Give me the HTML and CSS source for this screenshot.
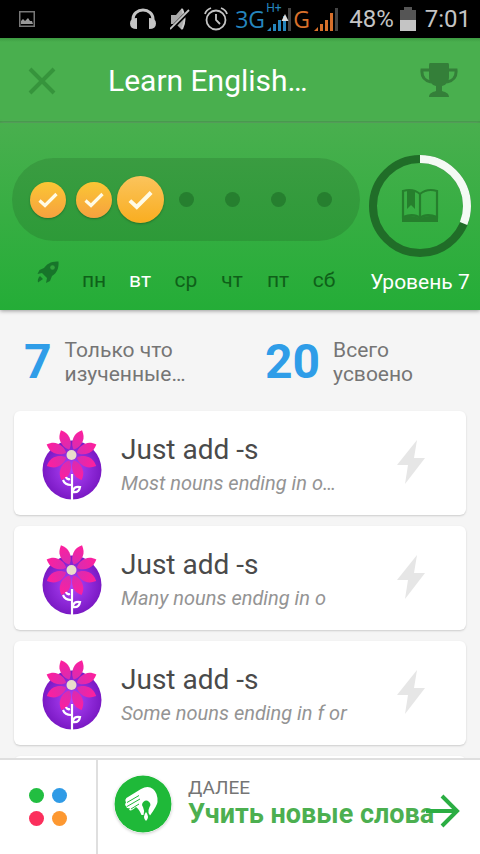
FILE: index.html
```html
<!DOCTYPE html>
<html lang="ru">
<head>
<meta charset="utf-8">
<meta name="viewport" content="width=device-width, initial-scale=1">
<title>Learn English</title>
<link rel="stylesheet" href="styles.css">
</head>
<body>
<svg class="defs" width="0" height="0" aria-hidden="true">
  <defs>
    <radialGradient id="orb"><stop offset="0" stop-color="#b044fa"/><stop offset="1" stop-color="#7a19c4"/></radialGradient>
    <linearGradient id="petal-fill" x1="0" y1="0" x2="0" y2="1"><stop offset="0" stop-color="#ff1f9c"/><stop offset="1" stop-color="#d82cb2"/></linearGradient>
    <path id="petal" d="M0-6C-3-8-5-12-5-17C-5-21-3-24 0-27C3-24 5-21 5-17C5-12 3-8 0-6Z" fill="url(#petal-fill)"/>
  </defs>
  <symbol id="flower" viewBox="0 0 60 72">
    <circle cx="30" cy="41" r="29.5" fill="url(#orb)"/>
    <g transform="translate(29.5 26)">
      <use href="#petal" transform="rotate(23)"/>
      <use href="#petal" transform="rotate(67)"/>
      <use href="#petal" transform="rotate(114)"/>
      <use href="#petal" transform="rotate(158)"/>
      <use href="#petal" transform="rotate(202)"/>
      <use href="#petal" transform="rotate(246)"/>
      <use href="#petal" transform="rotate(293)"/>
      <use href="#petal" transform="rotate(337)"/>
    </g>
    <circle cx="29.500" cy="26" r="5" fill="#eaddcb"/>
    <path d="M30 45V71M29 56Q23 56 21 51M28 50Q25 51 24 48M31 63Q31 57 38 58Q37 64 31 63" fill="none" stroke="#fff" stroke-width="2.2"/>
  </symbol>
  <symbol id="bolt" viewBox="0 0 28 46"><path d="M20 0L0 25H11L8 44L28 18H17Z" fill="#e6e6e6"/></symbol>
  <symbol id="check" viewBox="0 0 20 16"><path d="M1.500 8.500L7 13.500L18.500 2" fill="none" stroke="#fffbe6" stroke-width="3.200"/></symbol>
</svg>

<div class="status">
  <svg class="status-photo" width="16" height="16" viewBox="0 0 16 16"><path d="M.75.75h14.500v14.500H.75z" fill="none" stroke="#777" stroke-width="1.500"/><path d="M2 13V10l2-2 2 2 3-3 2 3h2l1 3z" fill="#999"/></svg>
  <svg width="26" height="22" viewBox="0 0 26 22"><path d="M3 13V11A10 9 0 0 1 23 11V13" fill="none" stroke="#c4c4c4" stroke-width="3"/><path d="M7 10v11Q0 21 0 15.500T7 10zM19 10v11q7 0 7-5.500T19 10z" fill="#c4c4c4"/></svg>
  <svg class="status-mute" width="20" height="24" viewBox="0 0 20 24"><path d="M1 8h5l6-7q4 10 0 22l-6-6H1z" fill="#aaa"/><path d="M12 2q5 10 0 20" fill="none" stroke="#ccc" stroke-width="2"/><path d="M1 22L20 3" stroke="#000" stroke-width="4"/><path d="M0 22L19 3" stroke="#c4c4c4" stroke-width="1.800"/></svg>
  <svg class="status-alarm" width="24" height="24" viewBox="0 0 24 24" fill="none" stroke="#c4c4c4" stroke-width="1.800"><circle cx="12" cy="13" r="9.500"/><path d="M12 7v6l4 4M1 7Q2 3 7 1M17 1q5 2 6 6"/></svg>
  <span class="net net-blue">3G</span>
  <span class="signal">
    <span class="hspa">H+</span>
    <svg width="24" height="24" viewBox="0 0 24 24"><path d="M0 24l4-4v4zM6 17h3v7H6zM11 13h3v11h-3zM16 9h3v15h-3z" fill="#2585bd"/><path d="M21 1h3v23h-3z" fill="#444"/><path d="M18 7l3.500 7h-7z" fill="#ddd"/></svg>
  </span>
  <span class="net net-orange">G</span>
  <svg class="bars-orange" width="24" height="24" viewBox="0 0 24 24"><path d="M0 24l4-4v4zM6 17h3v7H6zM11 13h3v11h-3zM16 6h3v18h-3z" fill="#d8702b"/><path d="M21 1h3v23h-3z" fill="#444"/></svg>
  <span class="battery-level">48%</span>
  <svg class="battery" width="16" height="24" viewBox="0 0 16 24"><path d="M4 0h8v3h4v10H0V3h4z" fill="#555"/><path d="M0 13h16v11H0z" fill="#c4c4c4"/></svg>
  <time>7:01</time>
</div>

<header class="appbar">
  <button class="icon-button" aria-label="Закрыть"><svg width="28" height="28" viewBox="0 0 28 28"><path d="M2 2L26 26M26 2L2 26" stroke="#36943c" stroke-width="4"/></svg></button>
  <h1>Learn English…</h1>
  <button class="icon-button" aria-label="Достижения"><svg width="38" height="36" viewBox="0 0 38 36"><path d="M10 0h18q1 0 1 2v12c0 5-3 8-7 9v5c3 1 7 2 7 6H9c0-4 4-5 7-6v-5c-4-1-7-4-7-9V2q0-2 1-2z" fill="#347f39"/><path d="M10 7H2Q1 17 11 19M28 7h8q1 10-9 12" fill="none" stroke="#347f39" stroke-width="3"/></svg></button>
</header>

<section class="hero">
  <div class="week">
    <div class="track">
      <span class="done"><svg width="20" height="16"><use href="#check"/></svg></span>
      <span class="done"><svg width="20" height="16"><use href="#check"/></svg></span>
      <span class="done today"><svg width="25" height="20"><use href="#check"/></svg></span>
      <span class="dot"></span><span class="dot"></span><span class="dot"></span><span class="dot"></span>
    </div>
    <div class="days">
      <svg class="rocket" width="22" height="22" viewBox="0 0 22 22"><path d="M21.500.5C14 0 10 3 7 7L2.500 9 .5 13 5 12l5 5-1 5 4-2 2-5c5-3 7-8 6.500-14.500zM3 15l3 3-5 3.500Q0 18 3 15z" fill="#17752a"/><circle cx="15.500" cy="6.500" r="2.300" fill="#31a13b"/></svg>
      <span>пн</span><span class="current">вт</span><span>ср</span><span>чт</span><span>пт</span><span>сб</span>
    </div>
  </div>
  <div class="level">
    <svg viewBox="0 0 102 102">
      <circle cx="51" cy="51" r="47" fill="none" stroke="#206d28" stroke-width="8"/>
      <circle cx="51" cy="51" r="47" fill="none" stroke="#f4faf4" stroke-width="8" pathLength="360" stroke-dasharray="112 248" transform="rotate(-90 51 51)"/>
      <path d="M34 36Q44 33 51 39Q58 33 68 36V62Q57 58 51 63Q45 58 34 62zM51 39V64" fill="none" stroke="#267f2d" stroke-width="2.200"/>
      <path d="M33 62Q45 59 51 64Q57 59 69 62V67H33zM38 36h8v18l-4-4-4 4z" fill="#267f2d"/>
    </svg>
    <span>Уровень 7</span>
  </div>
</section>

<main>
  <section class="stats">
    <div class="stat"><strong>7</strong><span>Только что<br>изученные…</span></div>
    <div class="stat"><strong>20</strong><span>Всего<br>усвоено</span></div>
  </section>
  <ul class="cards">
    <li class="card"><svg class="flower" width="60" height="72"><use href="#flower"/></svg><div class="card-text"><h2>Just add -s</h2><p>Most nouns ending in o…</p></div><svg width="28" height="46"><use href="#bolt"/></svg></li>
    <li class="card"><svg class="flower" width="60" height="72"><use href="#flower"/></svg><div class="card-text"><h2>Just add -s</h2><p>Many nouns ending in o</p></div><svg width="28" height="46"><use href="#bolt"/></svg></li>
    <li class="card"><svg class="flower" width="60" height="72"><use href="#flower"/></svg><div class="card-text"><h2>Just add -s</h2><p>Some nouns ending in f or</p></div><svg width="28" height="46"><use href="#bolt"/></svg></li>
    <li class="card"></li>
  </ul>
</main>

<footer>
  <button class="modes" aria-label="Режимы"><i class="green"></i><i class="blue"></i><i class="red"></i><i class="orange"></i></button>
  <button class="next">
    <svg class="hand" width="58" height="58" viewBox="0 0 58 58"><circle cx="29" cy="29" r="28.500" fill="#1fb939"/>
      <path d="M14 22L27 14Q34 10 39 14Q44 18 43.500 27Q43 31 36 40.500L34.500 38Q34 35 35.500 32A4 4 0 1 0 29 32Q31 36 29.500 40L27.500 40Q25 34 22 32Q19 35 17 35.500Q14 35.500 16 33Q12 34 12.500 31.500Q10 30 12 27.500Q10 24 14 22z" fill="#fff"/>
      <path d="M13 27.500L25 20.500M13 31.500L26 24M17 34L25 29" stroke="#1fb939" stroke-width="1"/>
      <path d="M32 37q4 5 0 9q-4-4 0-9z" fill="#fff"/></svg>
    <span class="next-text"><small>ДАЛЕЕ</small><b>Учить новые слова</b></span>
    <svg class="arrow" width="34" height="34" viewBox="0 0 34 34"><path d="M0 17H31M16 2L31 17L16 32" fill="none" stroke="#2bae43" stroke-width="4"/></svg>
  </button>
</footer>
</body>
</html>
```
FILE: styles.css
```css
* { box-sizing: border-box; }

body {
  margin: 0;
  height: 100vh;
  display: flex;
  flex-direction: column;
  overflow: hidden;
  background: #f5f5f5;
  color: #757575;
  font-family: Roboto, "Noto Sans", sans-serif;
  font-size: 21px;
}

h1, h2, p, ul { margin: 0; padding: 0; font-weight: 400; }
svg { display: block; flex: none; }
.defs { position: absolute; }
button { border: 0; padding: 0; background: none; font: inherit; color: inherit; }

.status {
  flex: none;
  height: 38px;
  padding: 0 9px 0 19px;
  display: flex;
  align-items: center;
  background: #000;
  color: #c4c4c4;
  font-size: 24px;
  line-height: 40px;
}
.status-photo { margin-right: auto; }
.status-mute { margin-left: 14px; }
.status-alarm { margin: 0 7px 0 14px; }
.net { font-family: "Open Sans", sans-serif; font-size: 23px; line-height: 36px; }
.net-blue { color: #2585bd; width: 32px; }
.signal { position: relative; }
.hspa {
  position: absolute;
  left: -1px;
  top: -5px;
  color: #2585bd;
  font-size: 12px;
  line-height: 12px;
}
.net-orange { color: #d8702b; margin-left: 2px; width: 21px; }
.bars-orange { margin-right: 11px; }
.battery { margin: 0 9px 0 6px; }

.appbar {
  flex: none;
  height: 85px;
  padding: 2px 22px 0 28px;
  display: flex;
  align-items: center;
  background: linear-gradient(#3d9b42, #49af4e 4px);
  border-bottom: 2px solid #3f9b45;
  color: #fff;
}
.appbar h1 { flex: 1; margin-left: 52px; font-size: 30px; line-height: 40px; }

.hero {
  flex: none;
  display: flex;
  gap: 9px;
  height: 187px;
  padding: 32px 9px 0 12px;
  background: linear-gradient(#49af4e, #24ad37);
  box-shadow: 0 1px 4px #999;
  color: #0f6019;
}
.week { flex: 1; padding-top: 3px; }
.track, .days {
  display: grid;
  grid-template-columns: repeat(7, 1fr);
  align-items: center;
  justify-items: center;
  padding: 0 13px;
}
.track { height: 83px; border-radius: 42px; background: linear-gradient(#3a9c41, #2d9a38); }
.done {
  display: grid;
  place-items: center;
  width: 36px;
  height: 36px;
  border-radius: 50%;
  background: linear-gradient(#fbc634, #f6a13f);
  box-shadow: 0 1px 2px #246f2b;
}
.today { width: 47px; height: 47px; background: linear-gradient(#fbc45c, #f9ad20); }
.dot { width: 15px; height: 15px; border-radius: 50%; background: #267f2f; }
.days { margin-top: 20px; line-height: 38px; }
.rocket { align-self: start; }
.current { color: #fff; }

.level { width: 102px; color: #fff; text-align: center; white-space: nowrap; }
.level span { display: block; margin-top: 11px; line-height: 28px; }

main { flex: 1; min-height: 0; overflow: hidden; padding: 28px 14px 0; }
.stats { display: grid; grid-template-columns: 241px 1fr; padding-left: 10px; line-height: 24px; }
.stat { display: flex; align-items: center; gap: 13px; }
.stat strong { color: #2f9de8; font-size: 48px; line-height: 48px; }

.cards { list-style: none; margin-top: 25px; display: grid; gap: 11px; }
.card {
  height: 104px;
  padding: 0 41px 0 28px;
  display: flex;
  align-items: center;
  background: #fff;
  border-radius: 6px;
  box-shadow: 0 1px 2px #ccc;
}
.flower, .card-text { margin-top: 4px; }
.card-text { flex: 1; margin-left: 19px; }
.card h2 { color: #4a4a4a; font-size: 28px; line-height: 36px; }
.card p { color: #949494; font-size: 20px; font-style: italic; line-height: 30px; }

footer {
  position: relative;
  flex: none;
  height: 96px;
  display: flex;
  background: #fff;
  border-top: 2px solid #dfdfdf;
}
.modes {
  width: 98px;
  border-right: 2px solid #dfdfdf;
  display: grid;
  grid-template-columns: 15px 15px;
  gap: 8px;
  place-content: center;
}
.modes i { width: 15px; height: 15px; border-radius: 50%; }
.green { background: #22be41; }
.blue { background: #309be6; }
.red { background: #fb2f5c; }
.orange { background: #fd9831; }
.next { flex: 1; display: flex; align-items: center; padding: 0 0 6px 16px; text-align: left; white-space: nowrap; }
.hand { border-radius: 50%; box-shadow: 0 1px 3px #ccc; }
.next-text { margin: 0 0 4px 16px; }
.next small { display: block; color: #757575; font-size: 19px; line-height: 24px; }
.next b { display: block; color: #4caf50; font-size: 27px; line-height: 28px; }
.arrow { position: absolute; right: 20px; top: 34px; }
```
